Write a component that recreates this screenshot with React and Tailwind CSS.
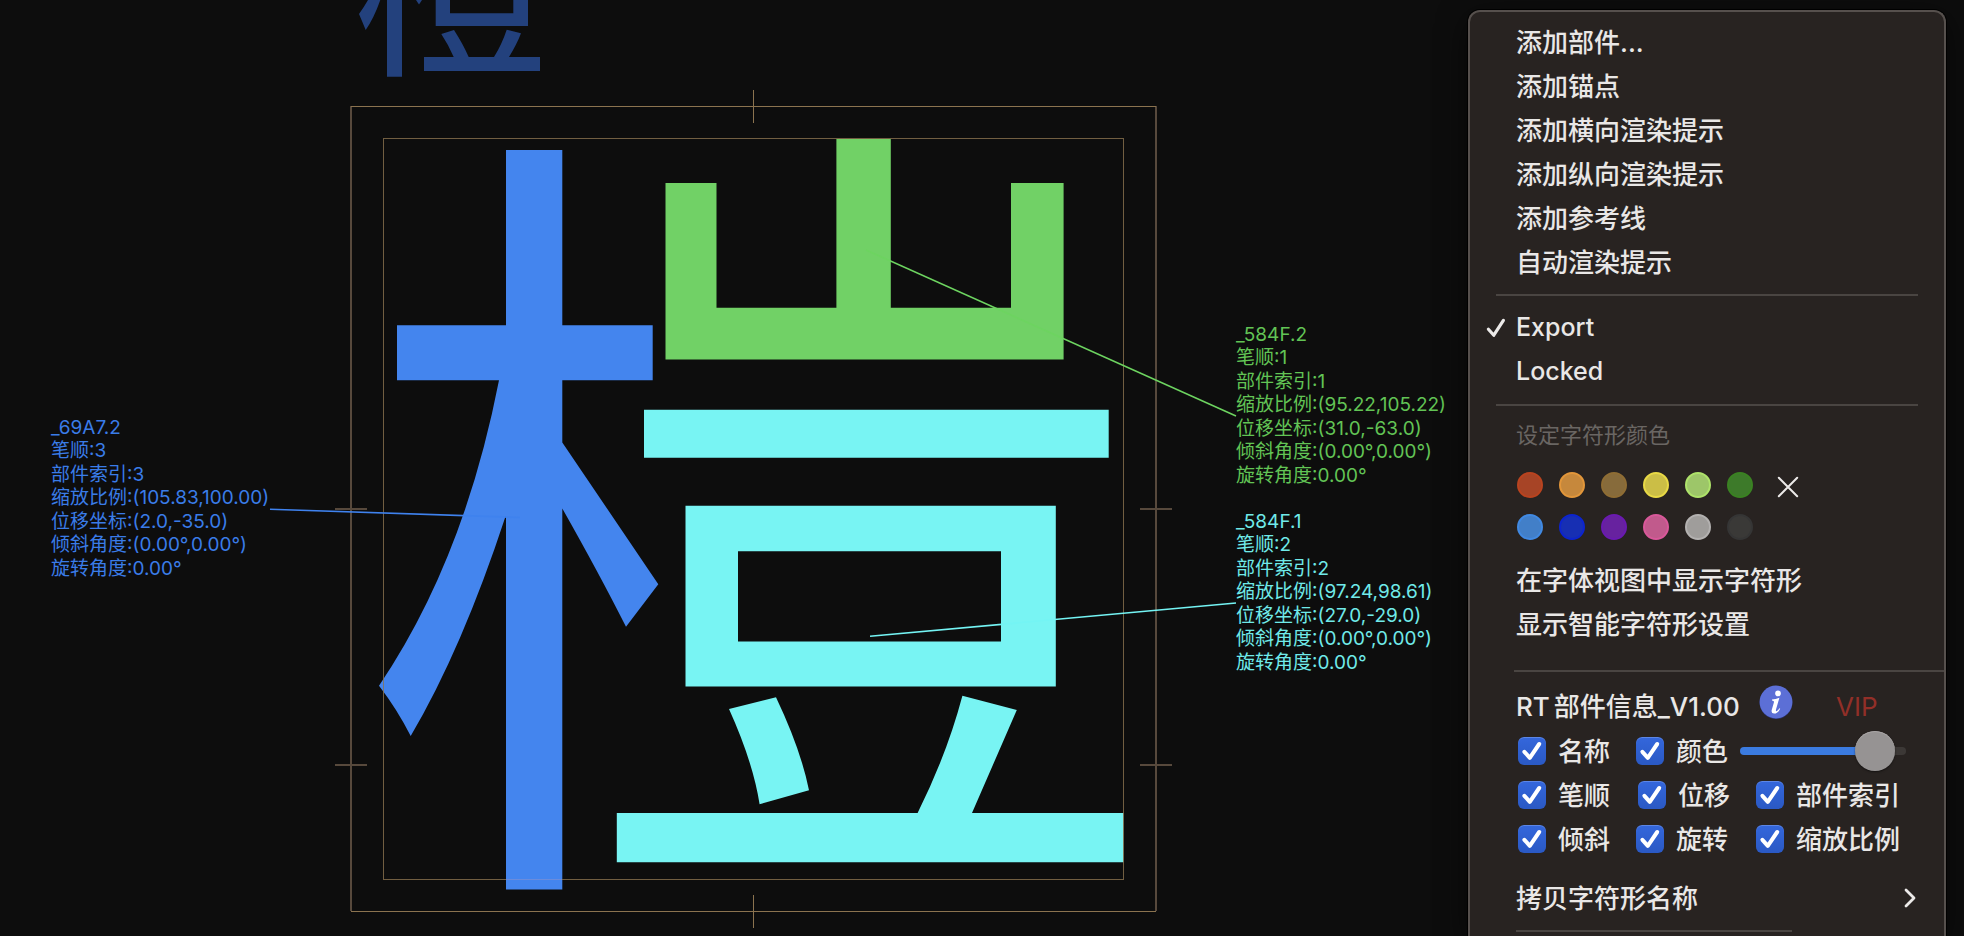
import { useState } from "react";

const FONT = "font-['Inter','Noto_Sans_CJK_SC',sans-serif]";

function Glyphs() {
  return (
    <svg className="absolute top-0 left-0" width="1240" height="936" viewBox="0 0 1240 936" role="img" aria-label="橙">
      <g fill="#23417d">
        <path d="M387 0H402V76.7H387Z" />
        <path d="M368 0H380.3Q374 18 365.7 30Q362 21 359 14Q364 7 368 0Z" />
        <path d="M416 0H422L419 4.4Z" />
        <path d="M435.7 0H450V13.3H513.3V0H528V26H435.7Z" />
        <path d="M441.3 34L454 30Q463 44 468.7 57H494Q502 44 506.7 29.7L521 33.3Q517 44 509 57H540V71H424V57H453.7Q448 44 441.3 34Z" />
      </g>

      <g fill="#4485ee">
        <path d="M506 150H562.3V325.3H652.7V380.3H562.3V442.4L658.3 584.3L626 626.8Q600 575 562.3 508.4V889.6H506V516.5H505.5Q462 649 410.7 736Q397 709 379 685.7Q464 560 499 380.3H397V325.3H506Z" />
      </g>
      <path
        fill="#71d166"
        d="M665.5 183H716.5V307.7H836.4V139H890.8V307.7H1011V183H1063.6V359.4H665.5Z"
      />
      <g fill="#78f4f3">
        <path d="M644 409.8H1108.7V457.7H644Z" />
        <path fillRule="evenodd" d="M685.5 505.7H1055.8V686.4H685.5ZM738 551.3V641.6H1001V551.3Z" />
        <path d="M729 709L776 697.3Q801 750 809 790.3L759.6 804.3Q753 762 729 709Z" />
        <path d="M962.4 695.7L1016.8 710L972 813H1123.5V862.3H616.8V813H917.6Q947 754 962.4 695.7Z" />
      </g>

      <g fill="#57493c">
        <path d="M350 106H352V911H350Z" />
        <path d="M1155 106H1157V911H1155Z" />
        <path d="M335 508H367V510H335Z" />
        <path d="M335 764H367V766H335Z" />
        <path d="M1140 508H1172V510H1140Z" />
        <path d="M1140 764H1172V766H1140Z" />
      </g>
      <g fill="#8b734f">
        <path d="M351 106H1156V107H351Z" />
        <path d="M351 911H1156V912H351Z" />
        <path d="M753 90H754V123H753Z" />
        <path d="M753 895H754V928H753Z" />
      </g>
      <g fill="#8b734f" fillOpacity="0.8">
        <path d="M383 138H1124V139H383Z" />
        <path d="M383 879H506V880H383ZM562 879H1124V880H562Z" />
        <path d="M383 139H384V879H383Z" />
        <path d="M1123 139H1124V879H1123Z" />
      </g>
      <path fill="#6b8cdc" d="M506 879H562V880H506Z" />

      <g strokeWidth="1.6" fill="none">
        <path stroke="#3f82ee" d="M270 509.3L520 517.5" />
        <path stroke="#6dd460" d="M866 250L1236 416" />
        <path stroke="#74f4f4" d="M870 636.3L1236 603" />
      </g>
    </svg>
  );
}

function PartInfo({ lines, className }) {
  return (
    <ul className={`absolute grid h-[164px] auto-rows-fr text-[19px] leading-[23px] whitespace-nowrap ${className}`}>
      {lines.map((line) => (
        <li key={line}>{line}</li>
      ))}
    </ul>
  );
}

function MenuItem({ children, className = "" }) {
  return (
    <button
      type="button"
      role="menuitem"
      className={`relative flex h-11 w-full items-center pl-[46px] text-left ${className}`}
    >
      {children}
    </button>
  );
}

function Separator({ className }) {
  return <hr className={`h-0.5 shrink-0 border-0 bg-[#4a4542] ${className}`} />;
}

function Check({ label, className = "" }) {
  return (
    <label className={`flex h-11 items-center gap-3 whitespace-nowrap ${className}`}>
      <span className="grid size-7 shrink-0">
        <input
          type="checkbox"
          defaultChecked
          className="peer col-start-1 row-start-1 size-7 appearance-none rounded-md bg-[#4a4542] checked:bg-linear-to-b checked:from-[#3467dc] checked:to-[#2a59c4] checked:shadow-[inset_0_1px_0_#5c86e6]"
        />
        <svg
          viewBox="0 0 28 28"
          className="pointer-events-none invisible col-start-1 row-start-1 size-7 peer-checked:visible"
          fill="none"
          stroke="#fff"
          strokeWidth="4"
          strokeLinecap="round"
          strokeLinejoin="round"
        >
          <path d="M6.4 14.8L11.8 20.8L21.2 7" />
        </svg>
      </span>
      <span>{label}</span>
    </label>
  );
}

function OpacitySlider() {
  const [value, setValue] = useState(91);
  const fill = `calc(20px + (100% - 40px) * ${value / 100})`;
  return (
    <input
      type="range"
      aria-label="颜色透明度"
      min="0"
      max="100"
      value={value}
      onChange={(e) => setValue(Number(e.target.value))}
      style={{ "--fill": fill }}
      className="h-10 w-[166px] appearance-none bg-transparent [&::-webkit-slider-runnable-track]:h-2 [&::-webkit-slider-runnable-track]:rounded-full [&::-webkit-slider-runnable-track]:bg-[linear-gradient(to_right,#3b7be0_var(--fill),#3c3836_var(--fill))] [&::-webkit-slider-thumb]:-mt-4 [&::-webkit-slider-thumb]:size-10 [&::-webkit-slider-thumb]:appearance-none [&::-webkit-slider-thumb]:rounded-full [&::-webkit-slider-thumb]:bg-[#969393] [&::-webkit-slider-thumb]:shadow-[0_1px_2px_rgba(0,0,0,0.5),inset_0_1px_0_#a8a5a5]"
    />
  );
}

const SWATCHES = [
  ["红", "bg-[#a74426] border-[#b9431f]"],
  ["橙", "bg-[#c6883c] border-[#e2963a]"],
  ["棕", "bg-[#876b3b] border-[#8f6d34]"],
  ["黄", "bg-[#cbbe46] border-[#e8d945]"],
  ["浅绿", "bg-[#9dc669] border-[#aee36a]"],
  ["深绿", "bg-[#3d7a2a] border-[#3a8222]"],
  ["浅蓝", "bg-[#427fc8] border-[#4189e2]"],
  ["深蓝", "bg-[#172fb3] border-[#0c24cf]"],
  ["紫", "bg-[#67229f] border-[#6a1ab1]"],
  ["洋红", "bg-[#c15a8c] border-[#d9589a]"],
  ["浅灰", "bg-[#9f9d9b] border-[#b3b1b0]"],
  ["深灰", "bg-[#3a3937] border-[#353535]"],
];

function ColorPicker() {
  return (
    <div className="mt-[22px] flex gap-6 pl-[47px]">
      <div className="grid grid-cols-6 gap-4">
        {SWATCHES.map(([name, tone]) => (
          <button key={name} type="button" aria-label={name} className={`size-[26px] rounded-full border-2 ${tone}`} />
        ))}
      </div>
      <button type="button" aria-label="清除颜色" className="mt-1 size-[22px]">
        <svg viewBox="0 0 22 22" className="size-[22px]" stroke="#eceae9" strokeWidth="2" strokeLinecap="round">
          <path d="M1.8 1.8L20.2 20.2M20.2 1.8L1.8 20.2" />
        </svg>
      </button>
    </div>
  );
}

function ContextMenu() {
  return (
    <div
      role="menu"
      className="absolute top-2.5 right-[18px] bottom-0 flex w-[478px] flex-col rounded-t-xl border-2 border-b-0 border-[#56504d] bg-[#282321] pt-2 text-[26px] font-medium text-[#e9e7e6] shadow-[0_0_0_1px_#000,0_8px_30px_rgba(0,0,0,0.6)]"
    >
      <MenuItem>添加部件...</MenuItem>
      <MenuItem>添加锚点</MenuItem>
      <MenuItem>添加横向渲染提示</MenuItem>
      <MenuItem>添加纵向渲染提示</MenuItem>
      <MenuItem>添加参考线</MenuItem>
      <MenuItem>自动渲染提示</MenuItem>

      <Separator className="mt-2.5 mr-[26px] mb-2.5 ml-[26px]" />

      <MenuItem className="text-[25px]">
        <svg
          viewBox="0 0 20 20"
          className="absolute left-4 size-5"
          fill="none"
          stroke="#eceae9"
          strokeWidth="3.2"
          strokeLinecap="round"
          strokeLinejoin="round"
        >
          <path d="M2.4 11.2L7.8 17.2L17.4 2.4" />
        </svg>
        Export
      </MenuItem>
      <MenuItem className="text-[25px]">Locked</MenuItem>

      <Separator className="mt-2.5 mr-[26px] mb-3.5 ml-[26px]" />

      <p className="pl-[46px] text-[22px] leading-[30px] font-normal text-[#6a6663]">设定字符形颜色</p>
      <ColorPicker />

      <div className="mt-[18px]">
        <MenuItem>在字体视图中显示字符形</MenuItem>
        <MenuItem>显示智能字符形设置</MenuItem>
      </div>

      <Separator className="mt-6 mb-3 ml-11" />

      <div className="flex h-11 items-center pl-[46px] whitespace-nowrap">
        <span className="flex w-[243px] gap-1">
          <span>RT</span>
          <span>部件信息_V1.00</span>
        </span>
        <button type="button" aria-label="关于" className="mb-2 size-[34px]">
          <svg viewBox="0 0 34 34" className="size-[34px]">
            <circle cx="17" cy="17.6" r="16.4" fill="#2b3372" />
            <circle cx="17" cy="17" r="16.4" fill="#5c6fd6" />
            <circle cx="19" cy="8.4" r="2.8" fill="#fff" />
            <path
              fill="#fff"
              d="M13 14.4Q16.6 14.4 20.4 12.8L17 24.6Q16.6 26.4 17.6 26.2Q18.8 25.8 20.4 23.2L21.2 23.8Q18.6 28.6 15 28.6Q11.8 28.4 12.8 24.8L14.9 17.4Q15.4 15.6 13 15.4Z"
            />
          </svg>
        </button>
        <span className="ml-[43px] font-normal text-[#922f28]">VIP</span>
      </div>

      <div className="mt-px">
        <div className="flex items-center pl-12">
          <Check label="名称" className="w-[118px]" />
          <Check label="颜色" className="w-[104px]" />
          <OpacitySlider />
        </div>
        <div className="grid grid-cols-[120px_118px_auto] pl-12">
          <Check label="笔顺" />
          <Check label="位移" />
          <Check label="部件索引" />
        </div>
        <div className="grid grid-cols-[118px_120px_auto] pl-12">
          <Check label="倾斜" />
          <Check label="旋转" />
          <Check label="缩放比例" />
        </div>
      </div>

      <div className="mt-[15px]">
        <MenuItem>
          拷贝字符形名称
          <svg
            viewBox="0 0 12 20"
            className="mr-7 ml-auto h-5 w-3"
            fill="none"
            stroke="#eceae9"
            strokeWidth="2.8"
            strokeLinecap="round"
            strokeLinejoin="round"
          >
            <path d="M2 2L10 10L2 18" />
          </svg>
        </MenuItem>
      </div>
      <Separator className="mt-2.5 ml-[46px] w-[276px]" />
    </div>
  );
}

export default function App() {
  return (
    <main className={`relative h-screen overflow-hidden bg-[#0d0d0d] ${FONT}`}>
      <Glyphs />
      <PartInfo
        className="top-[416px] left-[51px] text-[#3a7ce8]"
        lines={[
          "_69A7.2",
          "笔顺:3",
          "部件索引:3",
          "缩放比例:(105.83,100.00)",
          "位移坐标:(2.0,-35.0)",
          "倾斜角度:(0.00°,0.00°)",
          "旋转角度:0.00°",
        ]}
      />
      <PartInfo
        className="top-[323px] left-[1236px] text-[#62c455]"
        lines={[
          "_584F.2",
          "笔顺:1",
          "部件索引:1",
          "缩放比例:(95.22,105.22)",
          "位移坐标:(31.0,-63.0)",
          "倾斜角度:(0.00°,0.00°)",
          "旋转角度:0.00°",
        ]}
      />
      <PartInfo
        className="top-[510px] left-[1236px] text-[#70eae9]"
        lines={[
          "_584F.1",
          "笔顺:2",
          "部件索引:2",
          "缩放比例:(97.24,98.61)",
          "位移坐标:(27.0,-29.0)",
          "倾斜角度:(0.00°,0.00°)",
          "旋转角度:0.00°",
        ]}
      />
      <ContextMenu />
    </main>
  );
}
